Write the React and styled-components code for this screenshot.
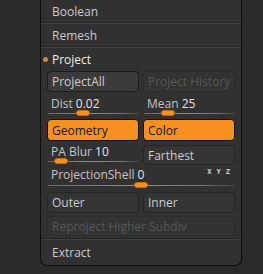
import React from 'react';
import styled, { createGlobalStyle } from 'styled-components';

const Global = createGlobalStyle`
  html, body {
    margin: 0;
    padding: 0;
    background: #2a2a2a;
    font-family: 'Open Sans', 'Noto Sans', sans-serif;
    font-size: 12px;
  }
`;

const Panel = styled.div`
  box-sizing: border-box;
  margin-left: 40px;
  width: 202px;
  background: #313131;
  border: 1px solid #0e0e0e;
  border-top: none;
  border-radius: 0 0 7px 7px;
  padding-bottom: 1px;
`;

const MenuRow = styled.div`
  box-sizing: border-box;
  height: ${({ h }) => h || 24}px;
  display: flex;
  align-items: center;
  padding-left: ${({ dot }) => (dot ? 2 : 11)}px;
  color: ${({ active }) => (active ? '#ededed' : '#c9c9c9')};
  border-top: ${({ first }) => (first ? 'none' : '1px solid #404040')};
  border-bottom: ${({ last }) => (last ? 'none' : '1px solid #232323')};
`;

const Dot = styled.span`
  width: 5px;
  height: 5px;
  border-radius: 50%;
  background: #d9842a;
  margin-right: 4px;
`;

const Section = styled.div`
  padding: 0 6px 2px;
  border-bottom: 1px solid #232323;
`;

const Grid = styled.div`
  display: grid;
  grid-template-columns: 92px 92px;
  column-gap: 4px;
  height: ${({ h }) => h}px;
  margin-top: ${({ mt }) => mt || 0}px;
`;

const Button = styled.div`
  box-sizing: border-box;
  display: flex;
  align-items: center;
  padding-left: 4px;
  height: ${({ h }) => h || 21}px;
  margin-top: ${({ mt }) => mt || 0}px;
  border-radius: 4px;
  white-space: nowrap;
  background: ${({ variant }) =>
    variant === 'on' ? '#f7901e' : variant === 'off' ? '#333333' : variant === 'raised' ? '#3b3b3b' : '#343434'};
  border: 1px solid
    ${({ variant }) =>
      variant === 'on' ? '#121212' : variant === 'off' ? '#2c2c2c' : variant === 'raised' ? '#1c1c1c' : '#262626'};
  color: ${({ variant }) => (variant === 'on' ? '#161616' : variant === 'off' ? '#575757' : '#cdcdcd')};
`;

const SliderBox = styled.div`
  position: relative;
  box-sizing: border-box;
  display: flex;
  flex-direction: column;
  height: ${({ h }) => (h ? `${h}px` : 'auto')};
  padding-top: ${({ pt }) => pt}px;
`;

const Label = styled.div`
  height: 14px;
  line-height: 14px;
  padding-left: 4px;
  color: #c4c4c4;
  white-space: nowrap;

  & b {
    font-weight: 400;
    color: #e4e4e4;
  }
`;

const Track = styled.div`
  position: relative;
  height: 1px;
  margin-top: ${({ mt }) => mt}px;
  margin-left: 1px;
  background: linear-gradient(90deg, #6a6a6a, #8c8c8c 45%, #777 80%, #444);
`;

const Handle = styled.div`
  position: absolute;
  top: -3px;
  width: 14px;
  height: 6px;
  box-sizing: border-box;
  border-radius: 3px;
  background: #f7901e;
  border: 1px solid #c56d10;
`;

const Axes = styled.div`
  position: absolute;
  top: 4px;
  right: 0;
  font-family: 'DejaVu Sans Mono', monospace;
  font-weight: 700;
  font-size: 7px;
  line-height: 6px;
  letter-spacing: 5px;
  color: #d4d4d4;
`;

function Slider({ label, value, pt, mt, at, axes, h }) {
  return (
    <SliderBox pt={pt} h={h}>
      <Label>
        {label} <b>{value}</b>
      </Label>
      <Track mt={mt}>
        <Handle style={{ left: at }} />
      </Track>
      {axes && <Axes>XYZ</Axes>}
    </SliderBox>
  );
}

export default function App() {
  return (
    <>
      <Global />
      <Panel>
        <MenuRow first h={23}>Boolean</MenuRow>
        <MenuRow h={24}>Remesh</MenuRow>
        <MenuRow active dot h={24} last>
          <Dot />
          Project
        </MenuRow>
        <Section>
          <Grid h={21}>
            <Button variant='raised'>ProjectAll</Button>
            <Button variant='off'>Project History</Button>
          </Grid>
          <Grid h={27}>
            <Slider label='Dist' value='0.02' pt={5} mt={2} at={28} />
            <Slider label='Mean' value='25' pt={5} mt={2} at={17} />
          </Grid>
          <Grid h={22}>
            <Button variant='on' h={22}>Geometry</Button>
            <Button variant='on' h={22}>Color</Button>
          </Grid>
          <Grid h={20} mt={4}>
            <Slider label='PA Blur' value='10' pt={0} mt={2} at={6} />
            <Button h={20}>Farthest</Button>
          </Grid>
          <Slider label='ProjectionShell' value='0' pt={3} mt={3} at={86} h={26} axes />
          <Grid h={21} mt={1}>
            <Button>Outer</Button>
            <Button>Inner</Button>
          </Grid>
          <Button variant='off' h={20} mt={3}>Reproject Higher Subdiv</Button>
        </Section>
        <MenuRow h={25} last>Extract</MenuRow>
      </Panel>
    </>
  );
}
